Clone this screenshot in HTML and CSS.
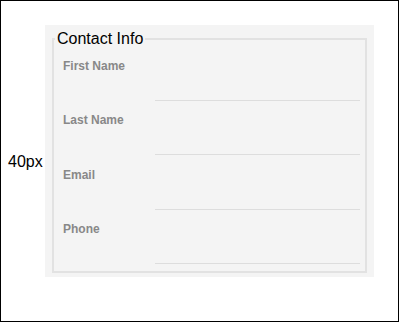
FILE: index.html
```html
<!DOCTYPE html>
<html>
<head>
<meta charset="utf-8">
<link rel="stylesheet" href="styles.css">
</head>
<body>
  <div class="stage">
    <span class="size-label">40px</span>
    <div class="panel">
      <fieldset class="contact">
        <legend>Contact Info</legend>
        <div class="row">
          <label class="field-label">First Name</label>
          <input class="field-input" type="text">
        </div>
        <div class="row">
          <label class="field-label">Last Name</label>
          <input class="field-input" type="text">
        </div>
        <div class="row">
          <label class="field-label">Email</label>
          <input class="field-input" type="text">
        </div>
        <div class="row">
          <label class="field-label">Phone</label>
          <input class="field-input" type="text">
        </div>
      </fieldset>
    </div>
  </div>
</body>
</html>
```

FILE: styles.css
```css
html, body {
  margin: 0;
  padding: 0;
  background: #fff;
}

body {
  width: 399px;
  height: 322px;
  box-sizing: border-box;
  border: 1px solid #000;
  font-family: "Liberation Sans", Arial, sans-serif;
}

.stage {
  display: flex;
  align-items: center;
  padding: 24px 0 0 7px;
  height: 252px;
}

.size-label {
  flex: 0 0 37px;
  font-size: 16px;
  line-height: 18px;
  color: #000;
  margin-top: 22px;
}

.panel {
  width: 329px;
  height: 252px;
  box-sizing: border-box;
  padding: 5px;
  background: #f4f4f4;
}

.contact {
  margin: 0 2px;
  padding: 9px 4px 7px 1px;
  border: 2px solid #e2e2e2;
}

.contact legend {
  padding: 0 2px;
  font-size: 16px;
  color: #000;
}

.row {
  padding: 2px 0 0 8px;
  margin-bottom: 10.33px;
}

.row:last-child {
  margin-bottom: 0;
}

.field-label {
  display: block;
  font-size: 12px;
  line-height: 14px;
  font-weight: bold;
  color: #888;
}

.field-input {
  display: block;
  box-sizing: border-box;
  width: 205px;
  height: 28px;
  margin: 0 0 0 92px;
  padding: 0;
  border: none;
  border-bottom: 1px solid #ddd;
  background: transparent;
  outline: none;
}
```
